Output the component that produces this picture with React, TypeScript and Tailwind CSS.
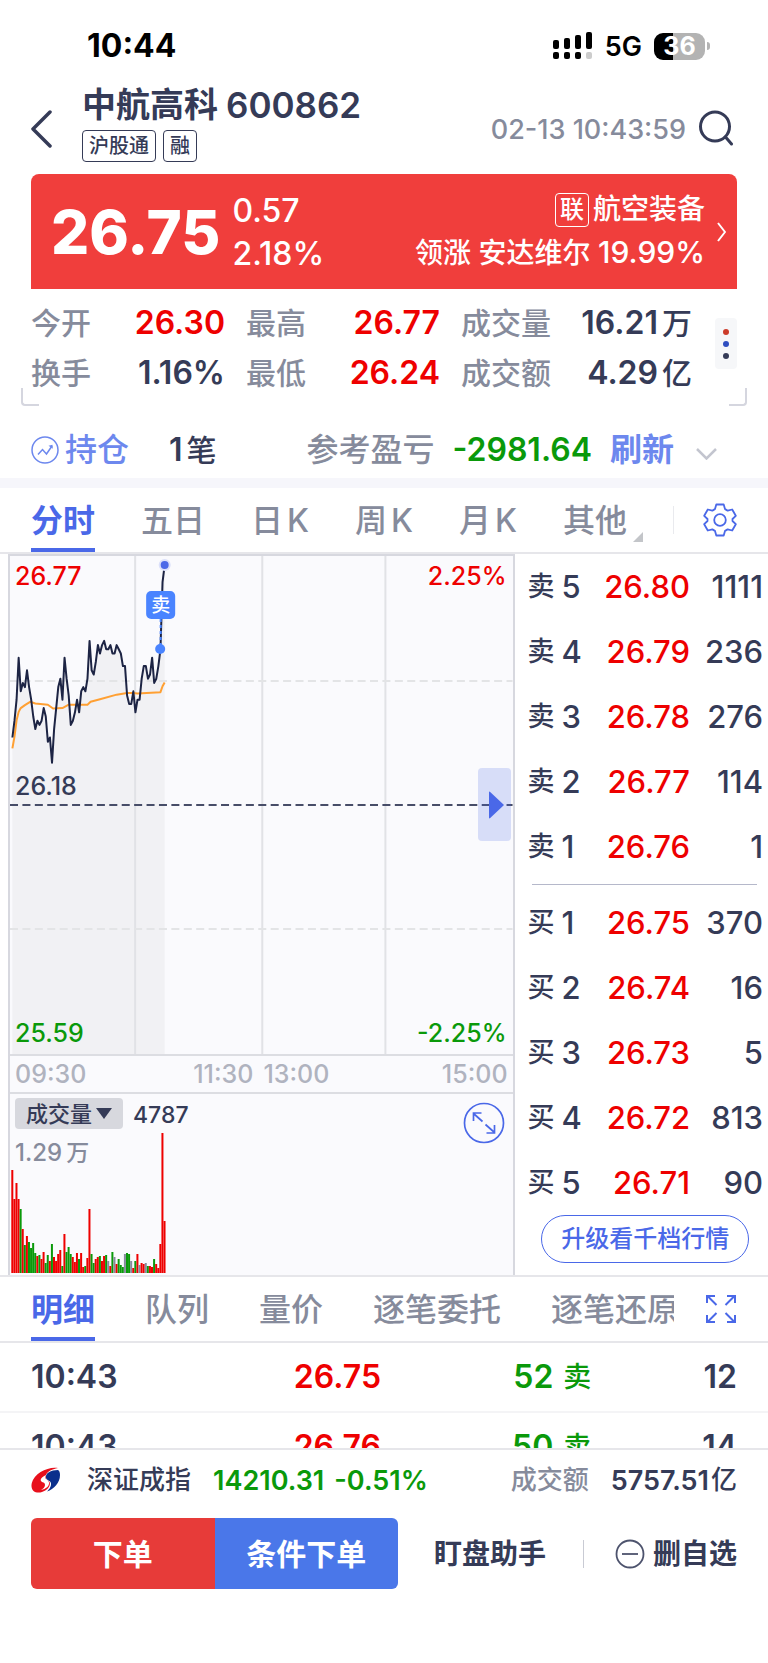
import React, { useState } from 'react';

interface OrderLevel {
  name: string;
  level: number;
  price: string;
  volume: string;
}

interface Trade {
  id: number;
  time: string;
  price: string;
  volume: string;
  side: string;
  count: string;
}

const sellOrders: OrderLevel[] = [
  { name: '卖', level: 5, price: '26.80', volume: '1111' },
  { name: '卖', level: 4, price: '26.79', volume: '236' },
  { name: '卖', level: 3, price: '26.78', volume: '276' },
  { name: '卖', level: 2, price: '26.77', volume: '114' },
  { name: '卖', level: 1, price: '26.76', volume: '1' },
];

const buyOrders: OrderLevel[] = [
  { name: '买', level: 1, price: '26.75', volume: '370' },
  { name: '买', level: 2, price: '26.74', volume: '16' },
  { name: '买', level: 3, price: '26.73', volume: '5' },
  { name: '买', level: 4, price: '26.72', volume: '813' },
  { name: '买', level: 5, price: '26.71', volume: '90' },
];

const trades: Trade[] = [
  { id: 1, time: '10:43', price: '26.75', volume: '52', side: '卖', count: '12' },
  { id: 2, time: '10:43', price: '26.76', volume: '50', side: '卖', count: '14' },
];

// Minute prices, in cents above the previous close of 26.18
const minutes = [
  16, 20, 25, 35, 27, 29, 28, 32, 28, 25, 21, 18, 20, 19, 20, 23, 21, 15, 16, 10,
  18, 23, 28, 30, 25, 35, 30, 26, 19, 20, 22, 25, 22, 27, 28, 27, 30, 39, 32, 31,
  34, 38, 36, 38, 39, 37, 37, 38, 36, 36, 38, 37, 36, 33, 33, 26, 24, 24, 27, 22,
  25, 25, 30, 33, 33, 30, 31, 35, 29, 30, 33, 37, 53, 57,
];

// [minute, cents above the close] for the average price line
const average = [
  [0, 13.4], [1, 16.2], [2, 20.1], [3, 22.1], [4, 23], [6, 23.7], [8.5, 24.5], [11, 24.1], [17, 23.8],
  [19.5, 22.9], [24, 23], [27, 23.8], [36, 23.8], [37.5, 24.5], [42, 25.1], [50, 26.2], [55, 26.6],
  [58, 26.6], [60, 26.5], [71, 26.8], [72, 28.2], [73, 29.1],
];

// Volume per minute: bar height and colour (r up, g down, n flat)
const volumes =
  '103r 74r 90r 74r 64g 44r 28g 37r 31g 25g 30g 20g 17r 18g 14r 21r 10g 18g 12r 29g 16r 12r 19r 23r 7g ' +
  '39r 21g 26g 19g 16r 11r 20r 14g 20r 6r 7g 15r 64r 19g 10g 14r 16r 17g 12r 17r 18g 12n 7r 21g 16n ' +
  '9r 14g 8g 6g 19n 20g 19g 12n 5r 12g 19r 8n 10r 9r 10n 7g 7r 6r 14g 9r 5r 29r 140r 52r';

const barColors: Record<string, string> = { r: '#ee0000', g: '#0a990a', n: '#868b9c' };

const minuteX = (i: number) => 2.4 + i * 2.083;
const priceY = (cents: number) => 248.7 - cents * 4.2;

const linePoints = minutes.map((c, i) => `${minuteX(i)},${priceY(c)}`).join(' ');
const averagePoints = average.map(([i, c]) => `${minuteX(i)},${priceY(c)}`).join(' ');
const areaPoints = `${minuteX(0)},498 ${linePoints} ${minuteX(73)},498`;

const StatusBar = () => (
  <div className="flex h-20 items-center justify-between pl-[87px] pr-[58px] pt-3 text-black">
    <span className="text-[32px] font-bold leading-none">10:44</span>
    <div className="flex items-center">
      <svg className="h-7 w-10" viewBox="0 0 40 28">
        <rect x="0" y="8" width="6" height="9" rx="2" />
        <rect x="11" y="6" width="6" height="11" rx="2" />
        <rect x="22" y="3" width="6" height="14" rx="2" />
        <rect x="33" y="0" width="6" height="17" rx="2" />
        <rect x="0" y="20" width="6" height="7" rx="2" />
        <rect x="11" y="20" width="6" height="7" rx="2" />
        <rect x="22" y="20" width="6" height="7" rx="2" />
        <rect x="33" y="20" width="6" height="7" rx="2" fill="#cccccc" />
      </svg>
      <span className="ml-3 text-[27px] font-semibold leading-none">5G</span>
      <div className="ml-3 flex h-[27px] w-[51px] items-center justify-center rounded-[9px] bg-linear-to-r from-black from-38% to-[#b3b3b3] to-38% text-[25px] font-bold leading-none text-white">
        36
      </div>
      <div className="ml-0.5 h-2 w-[3px] rounded-r-full bg-[#b3b3b3]"></div>
    </div>
  </div>
);

const Header = () => (
  <header className="flex items-start pl-[31px] pr-[34px] pt-[5px]">
    <button type="button" aria-label="返回" className="mt-6">
      <svg className="h-10 w-[22px]" viewBox="0 0 22 40" fill="none" stroke="#353b57" strokeWidth="3.500" strokeLinecap="round" strokeLinejoin="round">
        <path d="M19 3L2 20l17 17" />
      </svg>
    </button>
    <div className="ml-[29px] flex-1">
      <h1 className="flex items-center gap-2 text-[35px] font-semibold leading-10">
        <span className="text-[34px]">中航高科</span>
        <span>600862</span>
      </h1>
      <div className="mt-[5px] flex gap-[7px] text-xl font-medium leading-none">
        <span className="flex h-8 items-center rounded-sm border border-[#353b57] px-1.5">沪股通</span>
        <span className="flex h-8 items-center rounded-sm border border-[#353b57] px-1.5">融</span>
      </div>
    </div>
    <span className="mt-[29px] text-[27px] font-medium leading-8 text-[#868b9c]">02-13 10:43:59</span>
    <button type="button" aria-label="搜索" className="ml-3 mt-[25px]">
      <svg className="h-9 w-9" viewBox="0 0 36 36" fill="none" stroke="#353b57" strokeWidth="3" strokeLinecap="round">
        <circle cx="17" cy="16.5" r="14.5" />
        <path d="M27.5 27l6 7" />
      </svg>
    </button>
  </header>
);

const PriceCard = () => (
  <a href="#sector" className="mx-[31px] mt-3 flex h-[115px] items-center rounded-t-lg bg-[#f03e3c] pl-5 pr-2.5 text-white">
    <span className="text-[60px] font-extrabold leading-none">26.75</span>
    <div className="ml-3 text-[32px] font-medium leading-[43px]">
      <div>0.57</div>
      <div>2.18%</div>
    </div>
    <div className="ml-auto flex flex-col items-end text-[28px] font-medium leading-[43px]">
      <div className="flex items-center gap-1">
        <span className="flex h-[34px] w-[34px] items-center justify-center rounded-sm border border-white text-2xl">联</span>
        航空装备
      </div>
      <div className="whitespace-nowrap">
        领涨 安达维尔 <span className="text-[30px]">19.99%</span>
      </div>
    </div>
    <svg className="ml-3 h-5 w-2.5" viewBox="0 0 10 20" fill="none" stroke="#ffffff" strokeWidth="2" strokeLinejoin="round">
      <path d="M1 1l7 9-7 9" />
    </svg>
  </a>
);

interface StatProps {
  label: string;
  value: string;
  unit?: string;
  color?: string;
}

const Stat: React.FC<StatProps> = ({ label, value, unit, color = 'text-[#353b57]' }) => (
  <div className="flex h-[50px] items-center justify-between">
    <dt className="text-[30px] font-medium text-[#868b9c]">{label}</dt>
    <dd className={`flex items-center gap-1 text-[32px] ${color}`}>
      <span className="font-semibold">{value}</span>
      {unit && <span className="text-[30px] font-medium">{unit}</span>}
    </dd>
  </div>
);

const Stats = () => (
  <section className="relative flex h-[117px] items-start pl-[31px] pr-[31px] pt-[9px]">
    <dl className="grid flex-1 grid-cols-[194fr_194fr_231fr] gap-x-[21px]">
      <Stat label="今开" value="26.30" color="text-[#ee0000]" />
      <Stat label="最高" value="26.77" color="text-[#ee0000]" />
      <Stat label="成交量" value="16.21" unit="万" />
      <Stat label="换手" value="1.16%" />
      <Stat label="最低" value="26.24" color="text-[#ee0000]" />
      <Stat label="成交额" value="4.29" unit="亿" />
    </dl>
    <button type="button" aria-label="更多指标" className="ml-[23px] mt-5 flex h-[51px] w-[22px] flex-col items-center justify-center gap-1.5 rounded-sm bg-[#f6f7f9]">
      <span className="h-1.5 w-1.5 rounded-full bg-[#cc3b2a]"></span>
      <span className="h-1.5 w-1.5 rounded-full bg-[#2f4ec0]"></span>
      <span className="h-1.5 w-1.5 rounded-full bg-[#353b57]"></span>
    </button>
    <span className="absolute bottom-0 left-[21px] h-[18px] w-[18px] rounded-bl-sm border-b-2 border-l-2 border-[#d5d6df]"></span>
    <span className="absolute bottom-0 right-[21px] h-[18px] w-[18px] rounded-br-sm border-b-2 border-r-2 border-[#d5d6df]"></span>
  </section>
);

const Holding = () => (
  <section className="flex h-[72px] items-center pl-[31px] pr-[51px] pt-4 text-[32px] font-medium leading-none">
    <svg className="h-7 w-7" viewBox="0 0 28 28" fill="none" stroke="#6d88ee" strokeWidth="1.5">
      <circle cx="14" cy="14" r="13" />
      <path d="M7 18.5l4.5-5 4 4.500 5.500-8" />
      <path d="M17.500 9.800l4-1 .3 4z" fill="#6d88ee" stroke="none" />
    </svg>
    <span className="ml-1.5 text-[#6d88ee]">持仓</span>
    <span className="ml-10 flex items-center gap-1">
      <span className="font-semibold">1</span>
      <span className="text-[30px]">笔</span>
    </span>
    <span className="ml-auto text-[#868b9c]">参考盈亏</span>
    <span className="ml-[18px] font-semibold text-[#0a990a]">-2981.64</span>
    <button type="button" className="ml-[18px] font-bold text-[#6d88ee]">刷新</button>
    <button type="button" aria-label="展开" className="ml-[22px] mt-2">
      <svg className="block h-3 w-[21px]" viewBox="0 0 21 12" fill="none" stroke="#c3c5cf" strokeWidth="2.500">
        <path d="M1 1l9.500 9.500L20 1" />
      </svg>
    </button>
  </section>
);

const periods = ['分时', '五日', '日 K', '周 K', '月 K', '其他'];

const PeriodTabs = () => {
  const [active, setActive] = useState('分时');
  return (
    <nav className="flex h-[66px] items-center border-b-2 border-[#e6e6ea] pl-[31px] pr-[31px]">
      <div className="flex h-full gap-[46px]">
        {periods.map((period) => (
          <button
            key={period}
            type="button"
            onClick={() => setActive(period)}
            className={`relative flex h-full items-center gap-1 whitespace-nowrap border-b-4 pt-1.5 text-[32px] ${
              active === period ? 'border-[#4a68e8] font-bold text-[#4a68e8]' : 'border-transparent font-medium text-[#868b9c]'
            }`}
          >
            {period.split(' ').map((part) => (
              <span key={part}>{part}</span>
            ))}
            {period === '其他' && (
              <svg className="absolute -right-4 bottom-1.5 h-2.5 w-2.5" viewBox="0 0 10 10" fill="#c3c5c9">
                <path d="M10 0v10H0z" />
              </svg>
            )}
          </button>
        ))}
      </div>
      <span className="ml-auto h-7 w-px bg-[#e9eaee]"></span>
      <button type="button" aria-label="设置" className="ml-[29px]">
        <svg className="h-[34px] w-[34px]" viewBox="0 0 34 34" fill="none" stroke="#4a68e8" strokeWidth="1.800" strokeLinejoin="round">
          <path d="M13.300 1.500h7.400l1.300 4.600c.9.400 1.900 1 2.700 1.600l4.500-1.200 3.600 6.300-3.300 3.200v2l3.300 3.200-3.600 6.300-4.500-1.200c-.8.600-1.800 1.200-2.700 1.600l-1.300 4.600h-7.400L12 27.900c-.9-.4-1.900-1-2.700-1.600l-4.500 1.200-3.600-6.300L4.500 18v-2l-3.300-3.200 3.600-6.300 4.500 1.200c.8-.6 1.800-1.200 2.700-1.600z" />
          <circle cx="17" cy="17" r="5.800" />
        </svg>
      </button>
    </nav>
  );
};

const PriceChart = () => (
  <div className="relative text-[25px] font-medium leading-none">
    <svg className="block h-[498px] w-full" viewBox="0 0 502 498" preserveAspectRatio="none" fill="none">
      <polygon points={areaPoints} fill="#f1f1f4" />
      <path d="M125 0v498M252 0v498M375 0v498" stroke="#e1e2e6" strokeWidth="2" />
      <path d="M0 125h502M0 373h502" stroke="#e3e4e6" strokeWidth="2" strokeDasharray="8 4.400" />
      <path d="M0 249h502" stroke="#474d68" strokeWidth="2" strokeDasharray="8 4.400" />
      <polyline points={averagePoints} stroke="#ffa033" strokeWidth="2" strokeLinejoin="round" />
      <polyline points={linePoints} stroke="#1d2444" strokeWidth="2" strokeLinejoin="round" />
      <path d="M150.500 63v30" stroke="#4a84ff" strokeWidth="2" strokeDasharray="3 3" />
      <circle cx="150" cy="93" r="5" fill="#4a84ff" />
      <circle cx="154.500" cy="9" r="6" fill="#dbe0fa" />
      <circle cx="154.500" cy="9" r="4" fill="#4a68e8" />
      <rect x="136" y="35" width="29" height="28" rx="5" fill="#4a84ff" />
      <text x="150.500" y="56" textAnchor="middle" fontSize="19" fill="#ffffff">卖</text>
    </svg>
    <span className="absolute left-[5px] top-2 text-[#ee0000]">26.77</span>
    <span className="absolute right-1.5 top-2 text-[#ee0000]">2.25%</span>
    <span className="absolute left-[5px] top-[218px]">26.18</span>
    <span className="absolute bottom-2 left-[5px] text-[#0a990a]">25.59</span>
    <span className="absolute bottom-2 right-1.5 text-[#0a990a]">-2.25%</span>
    <button type="button" aria-label="收起盘口" className="absolute right-0.5 top-[212px] flex h-[73px] w-[33px] items-center justify-center rounded-sm bg-[#4a68e8]/20">
      <svg className="ml-1 h-7 w-[15px]" viewBox="0 0 15 28" fill="#4a68e8">
        <path d="M0 1.500Q0 0 1.200 1L15 14 1.200 27Q0 28 0 26.500z" />
      </svg>
    </button>
  </div>
);

const VolumeChart = () => (
  <div className="relative h-[181px] text-2xl font-medium leading-none">
    <svg className="block h-full w-full" viewBox="0 0 502 181" preserveAspectRatio="none">
      {volumes.split(' ').map((bar, i) => {
        const height = parseInt(bar, 10);
        return <rect key={i} x={1.3 + i * 2.083} y={179 - height} width="2" height={height} fill={barColors[bar.slice(-1)]} />;
      })}
    </svg>
    <div className="absolute left-[5px] top-1 flex items-center gap-2.5">
      <button type="button" className="flex h-[31px] w-[108px] items-center justify-center gap-1 rounded-sm bg-[#d7d8de] text-[22px]">
        成交量
        <svg className="h-[11px] w-4" viewBox="0 0 16 11" fill="#353b57">
          <path d="M0 0h16L8 11z" />
        </svg>
      </button>
      <span className="pt-1 text-[23px]">4787</span>
    </div>
    <span className="absolute left-[5px] top-[47px] flex items-center gap-1 text-[#868b9c]">
      1.29<span className="text-[23px]">万</span>
    </span>
    <button type="button" aria-label="放大" className="absolute right-2 top-2">
      <svg className="h-[42px] w-[42px]" viewBox="0 0 42 42" fill="none" stroke="#4a68e8" strokeWidth="1.700">
        <circle cx="21" cy="21" r="19.500" />
        <path d="M19.500 19.500L10.500 11.500M10.500 19v-8h8M22.500 22.500l9 8M31.500 23v8h-8" />
      </svg>
    </button>
  </div>
);

const OrderTable = ({ orders }: { orders: OrderLevel[] }) => (
  <table className="w-full table-fixed text-[31px] font-medium leading-none">
    <tbody>
      {orders.map((order) => (
        <tr key={order.level} className="h-[65px]">
          <td className="w-[28%] p-0">
            <span className="flex items-center gap-[7px]">
              <span className="text-[27px]">{order.name}</span>
              {order.level}
            </span>
          </td>
          <td className="w-[41%] p-0 text-right text-[#ee0000]">{order.price}</td>
          <td className="p-0 text-right">{order.volume}</td>
        </tr>
      ))}
    </tbody>
  </table>
);

const detailTabs = ['明细', '队列', '量价', '逐笔委托', '逐笔还原'];

const DetailTabs = () => {
  const [active, setActive] = useState('明细');
  return (
    <nav className="flex h-[68px] items-center border-b-2 border-t-2 border-[#e6e6ea] pl-[31px] pr-[31px]">
      <div className="flex h-full min-w-0 flex-1 gap-[50px] overflow-hidden">
        {detailTabs.map((tab) => (
          <button
            key={tab}
            type="button"
            onClick={() => setActive(tab)}
            className={`h-full shrink-0 border-b-4 pt-1.5 text-[32px] leading-none ${
              active === tab ? 'border-[#4a68e8] font-bold text-[#4a68e8]' : 'border-transparent font-medium text-[#868b9c]'
            }`}
          >
            {tab}
          </button>
        ))}
      </div>
      <button type="button" aria-label="全屏" className="ml-8">
        <svg className="h-[30px] w-[31px]" viewBox="0 0 31 30" fill="none" stroke="#4a68e8" strokeWidth="2">
          <path d="M1 9V2h8M1.500 2l9 9M21 2h8v7M28.500 2l-9 9M1 21v7h8M1.500 28l9-9M21 28h8v-7M28.500 28l-9-9" />
        </svg>
      </button>
    </nav>
  );
};

const TradeList = () => (
  <div className="h-[105px] overflow-hidden">
    <table className="w-full table-fixed text-[32px] font-semibold leading-none">
      <tbody>
        {trades.map((trade) => (
          <tr key={trade.id} className="h-[69px] border-b-2 border-[#f4f4f6]">
            <td className="w-1/4 p-0 pl-[31px]">{trade.time}</td>
            <td className="w-1/4 p-0 pr-[3px] text-right text-[#ee0000]">{trade.price}</td>
            <td className="w-[27%] p-0 text-[#0a990a]">
              <span className="flex items-center justify-end gap-2.5">
                {trade.volume}
                <span className="text-[28px] font-medium">{trade.side}</span>
              </span>
            </td>
            <td className="p-0 pr-[31px] text-right">{trade.count}</td>
          </tr>
        ))}
      </tbody>
    </table>
  </div>
);

const IndexBar = () => (
  <div className="flex h-[62px] items-center border-t-2 border-[#e6e6ea] px-[31px] text-[26px] font-medium leading-none">
    <svg className="h-[26px] w-[29px]" viewBox="0 0 29 26">
      <path d="M27 1C18-1 3 6 .8 16-1 24 5 27 11 25c6-2 9-7 7.500-10-1.200-2-4-2.500-4-5C14.500 5 21 2 27 1z" fill="#e8101c" />
      <path d="M27 3c-7 0-13 3-12 8 .5 2.500 4.500 2 5 5.500.4 3-2 6-4 8C23 22 29 16 29 8c0-2.500-.7-4.500-2-5z" fill="#0b2f8c" />
      <path d="M15 8c-4 2-6 4-5 6 1 1.700 4 1 4 4 0 2-2 4-4 5 5-1 8.500-4 8-7.500-.5-3-4-3-4-5.500z" fill="#ffffff" />
    </svg>
    <span className="ml-[27px]">深证成指</span>
    <span className="ml-[22px] text-[27px] font-semibold text-[#0a990a]">14210.31</span>
    <span className="ml-2.5 text-[27px] font-semibold text-[#0a990a]">-0.51%</span>
    <span className="ml-auto text-[#868b9c]">成交额</span>
    <span className="ml-[22px] flex items-center gap-0.5">
      <span className="text-[27px] font-semibold">5757.51</span>
      <span>亿</span>
    </span>
  </div>
);

const ActionBar = () => (
  <footer className="flex items-center px-[31px] pb-[73px] pt-2 text-[28px] font-bold leading-none">
    <div className="flex h-[71px] w-[52%] overflow-hidden rounded-md text-[30px] text-white">
      <button type="button" className="flex-1 bg-[#e73b39]">下单</button>
      <button type="button" className="flex-1 bg-[#4a77e9]">条件下单</button>
    </div>
    <button type="button" className="ml-9">盯盘助手</button>
    <span className="ml-auto h-7 w-px bg-[#c9cbd4]"></span>
    <button type="button" className="ml-[31px] flex items-center gap-2">
      <svg className="h-[30px] w-[30px]" viewBox="0 0 30 30" fill="none" stroke="#4d536d" strokeWidth="1.800">
        <circle cx="15" cy="15" r="13.500" />
        <path d="M7 15h16" />
      </svg>
      删自选
    </button>
  </footer>
);

const App: React.FC = () => {
  return (
    <div className="w-full overflow-hidden bg-white font-['Inter','Noto_Sans_CJK_SC',sans-serif] text-[#353b57]">
      <StatusBar />
      <Header />
      <PriceCard />
      <Stats />
      <Holding />
      <div className="h-2.5 bg-[#f6f6fb]"></div>
      <PeriodTabs />

      {/* Charts and order book */}
      <main className="flex">
        <div className="w-[67%] pl-2">
          <div className="border-x-2 border-t-2 border-[#d7d8df] bg-[#fafafd]">
            <PriceChart />
            <div className="grid h-10 grid-cols-3 items-center border-y-2 border-[#dcdde2] px-[5px] text-[25px] font-medium leading-none text-[#b0b3bf]">
              <span>09:30</span>
              <span className="flex justify-center gap-2.5">
                <span>11:30</span>
                <span>13:00</span>
              </span>
              <span className="text-right">15:00</span>
            </div>
            <VolumeChart />
          </div>
        </div>
        <div className="flex-1 pl-[13px] pr-[5px]">
          <OrderTable orders={sellOrders} />
          <div className="my-[5px] ml-1 mr-1.5 h-px bg-[#b5b8ca]"></div>
          <OrderTable orders={buyOrders} />
          <button type="button" className="mx-auto flex h-12 w-[208px] items-center justify-center whitespace-nowrap rounded-full border border-[#4a68e8] text-2xl font-medium text-[#4a68e8]">
            升级看千档行情
          </button>
        </div>
      </main>

      <DetailTabs />
      <TradeList />
      <IndexBar />
      <ActionBar />
    </div>
  );
};

export default App;
